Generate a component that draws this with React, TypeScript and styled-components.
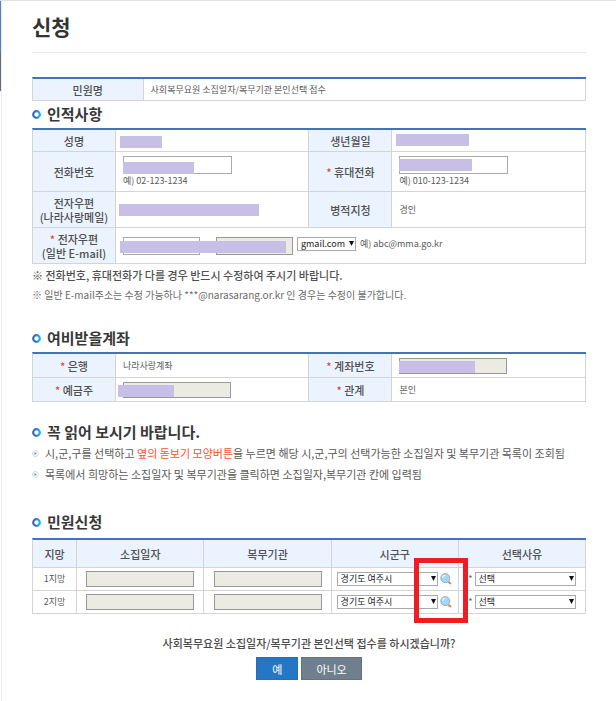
import React from 'react';
import styled, { createGlobalStyle, css } from 'styled-components';

const GlobalStyle = createGlobalStyle`
  *, *::before, *::after { box-sizing: border-box; }
  body {
    margin: 0;
    background: #fff;
    color: #5a5a5a;
    font-family: 'Noto Sans CJK KR', 'Noto Sans', sans-serif;
    font-size: 9px;
    line-height: 14px;
  }
  input, select, button { font-family: inherit; margin: 0; }
`;

const Page = styled.div`
  display: grid;
  grid-template-columns: 2px 1fr;
  min-height: 100vh;
  border-top: 1px solid #e4e4e4;
`;

const SideStrip = styled.div`
  border-right: 1px solid #ececec;
  background: linear-gradient(#4a80cc 0 51px, #656c7a 51px 90px, #fff 90px);
`;

const Main = styled.main`
  padding: 0 30px 20px;
`;

const PageTitle = styled.h1`
  margin: 0 0 24px;
  height: 52px;
  border-bottom: 1px solid #e6e6ea;
  color: #333;
  font-size: 21px;
  font-weight: 700;
  line-height: 51px;
`;

const Section = styled.section<{ $gap: number }>`
  margin-top: ${(p) => p.$gap}px;
`;

const Heading = styled.h2<{ $gap: number }>`
  display: flex;
  align-items: center;
  gap: 6px;
  height: 22px;
  margin: 0 0 ${(p) => p.$gap}px;
  color: #383838;
  font-size: 15px;
  font-weight: 700;
`;

const Table = styled.table`
  width: 100%;
  table-layout: fixed;
  border-collapse: separate;
  border-spacing: 0;
  border-top: 2px solid #4472c0;
  border-left: 1px solid #d4d4d4;
`;

const Col = styled.col<{ $w: number }>`
  width: ${(p) => p.$w}%;
`;

const Row = styled.tr<{ $h: number }>`
  height: ${(p) => p.$h}px;
`;

const cell = css`
  border-right: 1px solid #d4d4d4;
  border-bottom: 1px solid #d4d4d4;
`;

const Th = styled.th`
  ${cell}
  padding: 0;
  background: #eaf3fe;
  color: #505050;
  font-size: 11px;
  font-weight: 500;
  line-height: 14px;
`;

const Td = styled.td<{ $center?: boolean }>`
  ${cell}
  padding: 0 0 0 ${(p) => (p.$center ? 0 : 7)}px;
  text-align: ${(p) => (p.$center ? 'center' : 'left')};
`;

const Star = styled.span`
  color: #d9483b;
`;

const Field = styled.div`
  position: relative;
  display: flex;
  align-items: center;
  min-height: 12px;
`;

const TextInput = styled.input<{ $w: number; $h?: number }>`
  display: block;
  width: ${(p) => p.$w}px;
  height: ${(p) => p.$h ?? 18}px;
  padding: 0 3px;
  border: 1px solid #a9a9a9;
  border-radius: 0;
  background: #fff;
  font-size: 9px;
  &:read-only {
    background: #ebebe4;
    border-color: #999;
  }
`;

const CenteredInput = styled(TextInput)`
  margin: 0 auto;
`;

const Mask = styled.span<{ $x: number; $y: number; $w: number }>`
  position: absolute;
  left: ${(p) => p.$x}px;
  top: ${(p) => p.$y}px;
  width: ${(p) => p.$w}px;
  height: 12px;
  background: #c8bfe7;
`;

const Hint = styled.div`
  font-size: 9px;
  line-height: 14px;
`;

const At = styled.span`
  width: 16px;
  text-align: center;
`;

const SelectBox = styled.span<{ $w: number }>`
  position: relative;
  display: inline-block;
  flex: none;
  width: ${(p) => p.$w}px;
  height: 14px;
  select {
    appearance: none;
    display: block;
    width: 100%;
    height: 14px;
    padding: 0 8px 0 3px;
    border: 1px solid #a9a9a9;
    border-radius: 0;
    background: #fff;
    color: #222;
    font-size: 9px;
    line-height: 12px;
  }
  svg {
    position: absolute;
    right: 2px;
    top: 4px;
    pointer-events: none;
  }
`;

const EmailSelect = styled.div`
  display: flex;
  align-items: center;
  gap: 4px;
  margin: 0 0 4px 4px;
`;

const Notes = styled.div`
  color: #6a6a6a;
  font-size: 10px;
  line-height: 20px;
  padding-top: 1px;
  p { margin: 0; }
  strong { display: block; color: #505050; font-size: 11px; font-weight: 500; }
`;

const Guide = styled.ul`
  margin: 0;
  padding: 0;
  list-style: none;
  font-size: 11px;
  line-height: 21px;
  color: #5a5a5a;
  li { display: flex; align-items: center; gap: 6px; white-space: nowrap; }
  em { font-style: normal; color: #f8512f; }
`;

const RegionCell = styled(Td)`
  position: relative;
`;

const RegionControls = styled.div`
  display: flex;
  align-items: center;
  gap: 2px;
  padding-left: 5px;
`;

const ReasonControls = styled.div`
  display: flex;
  align-items: center;
  justify-content: center;
  gap: 2px;
`;

const IconButton = styled.button`
  display: flex;
  padding: 0;
  border: 0;
  background: none;
`;

const Highlight = styled.span`
  position: absolute;
  z-index: 1;
  top: -10px;
  right: -10px;
  width: 54px;
  height: 65px;
  border: 5px solid #ee1c25;
  pointer-events: none;
`;

const Confirm = styled.footer`
  margin-top: 19px;
  text-align: center;
  font-size: 11px;
  font-weight: 500;
  p { margin: 0 0 4px; line-height: 20px; color: #4a4a4a; }
`;

const Actions = styled.div`
  display: flex;
  justify-content: center;
  gap: 3px;
`;

const Button = styled.button<{ $primary?: boolean }>`
  height: 23px;
  padding: 0 ${(p) => (p.$primary ? 15 : 14)}px;
  border: 1px solid ${(p) => (p.$primary ? '#2a6db0' : '#66737f')};
  background: ${(p) => (p.$primary ? '#2576c4' : '#707f8d')};
  color: #fff;
  font-size: 11px;
  line-height: 20px;
`;

function Ring() {
  return (
    <svg width="9" height="9" viewBox="0 0 9 9" aria-hidden="true">
      <defs>
        <linearGradient id="ring" x1="0" y1="0" x2="1" y2="0">
          <stop offset="0.3" stopColor="#3f66b8" />
          <stop offset="1" stopColor="#12b4f0" />
        </linearGradient>
      </defs>
      <circle cx="4.5" cy="4.5" r="3.3" fill="none" stroke="url(#ring)" strokeWidth="2.2" />
    </svg>
  );
}

function Bullet() {
  return (
    <svg width="7" height="7" viewBox="0 0 7 7" aria-hidden="true">
      <circle cx="3.5" cy="3.5" r="3" fill="#fff" stroke="#cfd6dc" />
      <path d="M2.6 2v3l2.2-1.5z" fill="#3d87c4" />
    </svg>
  );
}

function Magnifier() {
  return (
    <svg width="12" height="12" viewBox="0 0 12 12" aria-hidden="true">
      <path d="M9 9.2l1.4 1.2" stroke="#c98d52" strokeWidth="2" strokeLinecap="round" />
      <circle cx="5.3" cy="5.1" r="4.5" fill="#a5d8f7" stroke="#9aa9ba" strokeWidth="1" />
      <path d="M2.6 5a2.8 2.8 0 0 1 2.8-2.7" fill="none" stroke="#e3f5ff" strokeWidth="1.2" />
    </svg>
  );
}

function Select({ label, option, width }: { label: string; option: string; width: number }) {
  return (
    <SelectBox $w={width}>
      <select aria-label={label} defaultValue={option}>
        <option>{option}</option>
      </select>
      <svg width="5" height="5" viewBox="0 0 5 5" aria-hidden="true">
        <path d="M0 0h5L2.5 5z" fill="#111" />
      </svg>
    </SelectBox>
  );
}

function SectionHeading({ children, gap }: { children: React.ReactNode; gap: number }) {
  return (
    <Heading $gap={gap}>
      <Ring />
      {children}
    </Heading>
  );
}

function PairCols() {
  return (
    <colgroup>
      <Col $w={15} />
      <Col $w={35} />
      <Col $w={15} />
      <Col $w={35} />
    </colgroup>
  );
}

export default function App() {
  return (
    <>
      <GlobalStyle />
      <Page>
        <SideStrip />
        <Main>
          <PageTitle>신청</PageTitle>

          <Table>
            <colgroup>
              <Col $w={20} />
              <Col $w={80} />
            </colgroup>
            <tbody>
              <Row $h={22}>
                <Th scope="row">민원명</Th>
                <Td>사회복무요원 소집일자/복무기관 본인선택 접수</Td>
              </Row>
            </tbody>
          </Table>

          <Section $gap={2}>
            <SectionHeading gap={3}>인적사항</SectionHeading>
            <Table>
              <PairCols />
              <tbody>
                <Row $h={22}>
                  <Th scope="row">성명</Th>
                  <Td>
                    <Field><Mask $x={-3} $y={1} $w={42} /></Field>
                  </Td>
                  <Th scope="row">생년월일</Th>
                  <Td>
                    <Field><Mask $x={-3} $y={-1} $w={73} /></Field>
                  </Td>
                </Row>
                <Row $h={40}>
                  <Th scope="row"><label htmlFor="phone">전화번호</label></Th>
                  <Td>
                    <Field>
                      <TextInput id="phone" $w={109} />
                      <Mask $x={0} $y={6} $w={71} />
                    </Field>
                    <Hint>예) 02-123-1234</Hint>
                  </Td>
                  <Th scope="row"><Star>*</Star> <label htmlFor="mobile">휴대전화</label></Th>
                  <Td>
                    <Field>
                      <TextInput id="mobile" $w={109} />
                      <Mask $x={0} $y={3} $w={73} />
                    </Field>
                    <Hint>예) 010-123-1234</Hint>
                  </Td>
                </Row>
                <Row $h={36}>
                  <Th scope="row">전자우편<br />(나라사랑메일)</Th>
                  <Td>
                    <Field><Mask $x={-4} $y={0} $w={140} /></Field>
                  </Td>
                  <Th scope="row">병적지청</Th>
                  <Td>경인</Td>
                </Row>
                <Row $h={36}>
                  <Th scope="row"><Star>*</Star> <label htmlFor="email">전자우편<br />(일반 E-mail)</label></Th>
                  <Td colSpan={3}>
                    <Field>
                      <TextInput id="email" $w={77} />
                      <At>@</At>
                      <TextInput aria-label="이메일 도메인" $w={77} readOnly />
                      <Mask $x={-3} $y={4} $w={166} />
                      <EmailSelect>
                        <Select label="이메일 도메인 선택" option="gmail.com" width={59} />
                        <span>예) abc@mma.go.kr</span>
                      </EmailSelect>
                    </Field>
                  </Td>
                </Row>
              </tbody>
            </Table>
            <Notes>
              <p><strong>※ 전화번호, 휴대전화가 다를 경우 반드시 수정하여 주시기 바랍니다.</strong></p>
              <p>※ 일반 E-mail주소는 수정 가능하나 ***@narasarang.or.kr 인 경우는 수정이 불가합니다.</p>
            </Notes>
          </Section>

          <Section $gap={22}>
            <SectionHeading gap={3}>여비받을계좌</SectionHeading>
            <Table>
              <PairCols />
              <tbody>
                <Row $h={24}>
                  <Th scope="row"><Star>*</Star> 은행</Th>
                  <Td>나라사랑계좌</Td>
                  <Th scope="row"><Star>*</Star> <label htmlFor="account">계좌번호</label></Th>
                  <Td>
                    <Field>
                      <TextInput id="account" $w={108} $h={16} readOnly />
                      <Mask $x={0} $y={3} $w={76} />
                    </Field>
                  </Td>
                </Row>
                <Row $h={24}>
                  <Th scope="row"><Star>*</Star> <label htmlFor="holder">예금주</label></Th>
                  <Td>
                    <Field>
                      <TextInput id="holder" $w={108} $h={16} readOnly />
                      <Mask $x={-5} $y={3} $w={56} />
                    </Field>
                  </Td>
                  <Th scope="row"><Star>*</Star> 관계</Th>
                  <Td>본인</Td>
                </Row>
              </tbody>
            </Table>
          </Section>

          <Section $gap={19}>
            <SectionHeading gap={0}>꼭 읽어 보시기 바랍니다.</SectionHeading>
            <Guide>
              <li>
                <Bullet />
                <span>
                  시,군,구를 선택하고 <em>옆의 돋보기 모양버튼</em>을 누르면 해당 시,군,구의 선택가능한 소집일자 및 복무기관 목록이 조회됨
                </span>
              </li>
              <li>
                <Bullet />
                <span>목록에서 희망하는 소집일자 및 복무기관을 클릭하면 소집일자,복무기관 칸에 입력됨</span>
              </li>
            </Guide>
          </Section>

          <Section $gap={26}>
            <SectionHeading gap={5}>민원신청</SectionHeading>
            <Table>
              <colgroup>
                <Col $w={8} />
                <Col $w={23} />
                <Col $w={23} />
                <Col $w={23} />
                <Col $w={23} />
              </colgroup>
              <thead>
                <Row $h={28}>
                  <Th scope="col">지망</Th>
                  <Th scope="col">소집일자</Th>
                  <Th scope="col">복무기관</Th>
                  <Th scope="col">시군구</Th>
                  <Th scope="col">선택사유</Th>
                </Row>
              </thead>
              <tbody>
                {['1지망', '2지망'].map((choice, i) => (
                  <Row $h={23} key={choice}>
                    <Td $center>{choice}</Td>
                    <Td $center><CenteredInput aria-label={`${choice} 소집일자`} $w={108} $h={16} readOnly /></Td>
                    <Td $center><CenteredInput aria-label={`${choice} 복무기관`} $w={108} $h={16} readOnly /></Td>
                    <RegionCell $center>
                      <RegionControls>
                        <Select label={`${choice} 시군구`} option="경기도 여주시" width={101} />
                        <IconButton type="button" aria-label={`${choice} 검색`}><Magnifier /></IconButton>
                      </RegionControls>
                      {i === 0 && <Highlight />}
                    </RegionCell>
                    <Td $center>
                      <ReasonControls>
                        <span>*</span>
                        <Select label={`${choice} 선택사유`} option="선택" width={101} />
                      </ReasonControls>
                    </Td>
                  </Row>
                ))}
              </tbody>
            </Table>
          </Section>

          <Confirm>
            <p>사회복무요원 소집일자/복무기관 본인선택 접수를 하시겠습니까?</p>
            <Actions>
              <Button type="button" $primary>예</Button>
              <Button type="button">아니오</Button>
            </Actions>
          </Confirm>
        </Main>
      </Page>
    </>
  );
}
